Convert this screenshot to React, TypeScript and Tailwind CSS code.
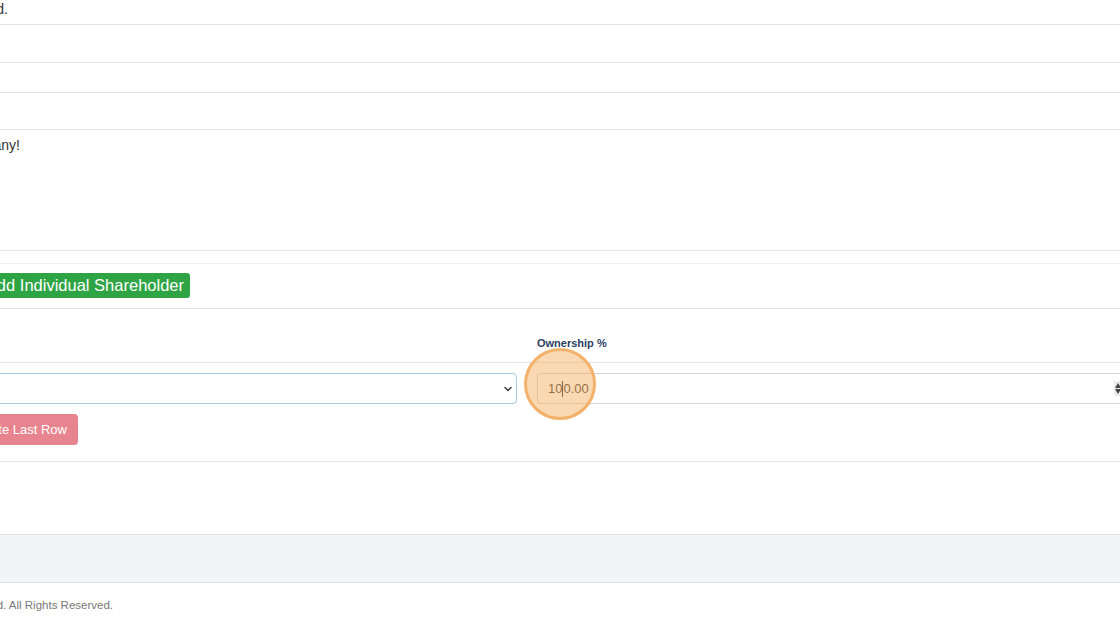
import React from "react";

function Clip({ end, children, className = "" }: { end: number; children: React.ReactNode; className?: string }) {
  return (
    <div className={"flex justify-end whitespace-nowrap " + className} style={{ width: end }}>
      {children}
    </div>
  );
}

export default function App() {
  return (
    <div className="w-[1120px] h-[626px] overflow-hidden bg-white text-[#333] font-['Liberation_Sans',Arial,sans-serif]">
      <div className="h-[24px]">
        <Clip end={8}>
          <p className="text-[14px] leading-[18px]">All fields are required.</p>
        </Clip>
      </div>
      <div className="h-[38px] border-t border-[#e3e3e3]" />
      <div className="h-[30px] border-t border-[#e3e3e3]" />
      <div className="h-[37px] border-t border-[#e3e3e3]" />
      <div className="h-[121px] border-t border-[#e3e3e3] pt-[5px]">
        <Clip end={20}>
          <p className="text-[14px] leading-[20px]">Tell us about your company!</p>
        </Clip>
      </div>
      <div className="h-[13px] border-t border-[#e3e3e3]" />
      <div className="h-[45px] border-t border-[#f0f0f0] pt-[9px]">
        <Clip end={190}>
          <button className="h-[25px] px-[6px] rounded-[3px] bg-[#2ea444] text-white text-[16.5px] leading-[25px]">
            Add Individual Shareholder
          </button>
        </Clip>
      </div>
      <div className="h-[54px] border-t border-[#e3e3e3] flex items-end pb-[12px]">
        <div className="w-[537px] shrink-0" />
        <span className="text-[11px] font-bold text-[#2c4064] leading-[14px]">Ownership %</span>
      </div>
      <div className="h-[99px] border-t border-[#e3e3e3] pt-[10px]">
        <div className="flex gap-[20px] relative">
          <div className="w-[517px] shrink-0 overflow-hidden">
            <div className="-ml-[20px] h-[31px] border border-[#a8cbe0] rounded-[4px] flex items-center justify-end pr-[3px]">
              <svg width="10" height="10" viewBox="0 0 10 10" className="text-[#444]">
                <path d="M2 3.5 L5 6.5 L8 3.5" fill="none" stroke="currentColor" strokeWidth="1.6" strokeLinecap="round" strokeLinejoin="round" />
              </svg>
            </div>
          </div>
          <div className="w-[600px] shrink-0 h-[31px] border border-[#d7d7d7] rounded-[3px] flex items-center pl-[10px] text-[13px] text-[#444] relative">
            <span>10</span>
            <span className="w-px h-[16px] bg-[#333]" />
            <span>0.00</span>
            <div className="absolute left-[576px] top-[7px] w-[7px] h-[15px] bg-[#ececec] flex flex-col items-center justify-center gap-[1px]">
              <svg width="6" height="5" viewBox="0 0 6 5"><path d="M0 5 L3 0 L6 5Z" fill="#444" /></svg>
              <svg width="6" height="5" viewBox="0 0 6 5"><path d="M0 0 L3 5 L6 0Z" fill="#444" /></svg>
            </div>
          </div>
          <div className="absolute left-[524px] top-[-25px] w-[72px] h-[72px] rounded-full border-[3px] border-[#f3b16a] bg-[#f5a855]/45" />
        </div>
        <div className="mt-[10px]">
          <Clip end={78}>
            <button className="h-[31px] px-[11px] rounded-[4px] bg-[#e8848f] text-white text-[13px] leading-[31px]">
              Delete Last Row
            </button>
          </Clip>
        </div>
      </div>
      <div className="h-[73px] border-t border-[#e3e3e3]" />
      <div className="h-[49px] border-t border-b border-[#e0e0e0] bg-[#f1f5f8]" />
      <div className="pt-[15px]">
        <Clip end={113}>
          <p className="text-[11.5px] leading-[14px] text-[#777]">© 2024 Company Name Limited. All Rights Reserved.</p>
        </Clip>
      </div>
    </div>
  );
}
